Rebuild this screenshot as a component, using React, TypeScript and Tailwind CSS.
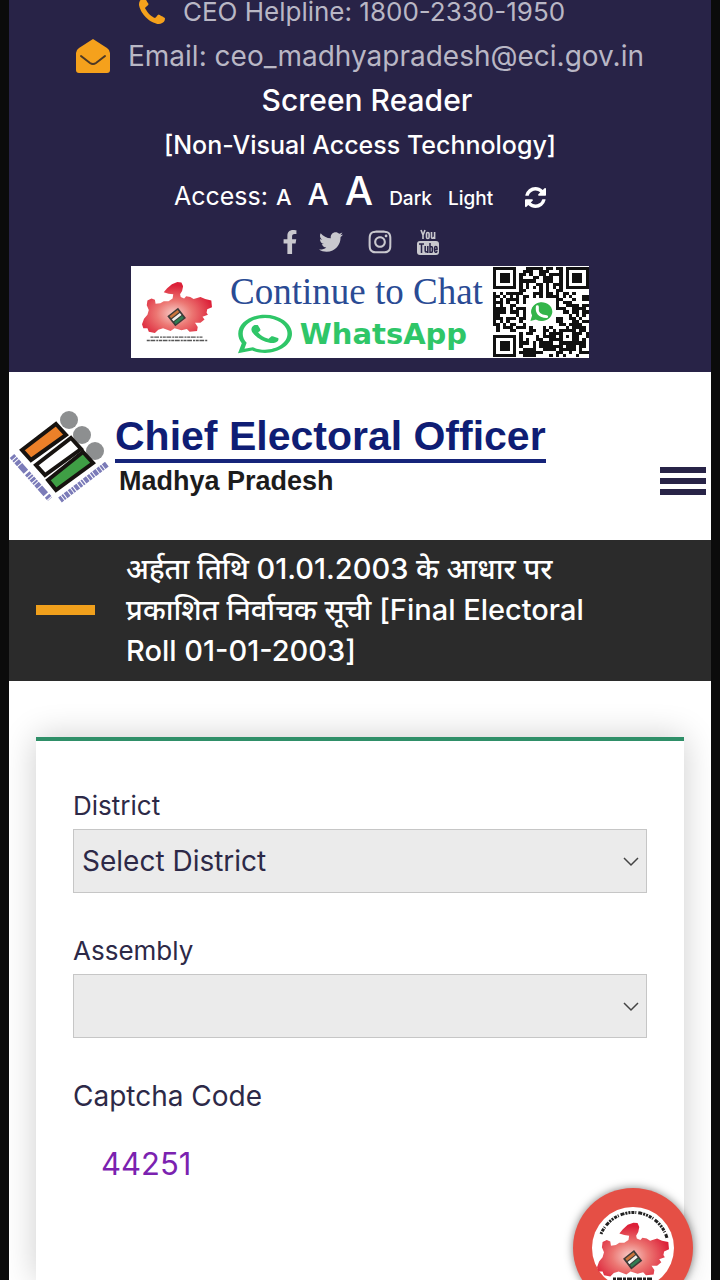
import { useState } from "react";
import { FaFacebookF, FaInstagram, FaTwitter, FaWhatsapp } from "react-icons/fa";

const districts = ["Bhopal", "Gwalior", "Indore", "Jabalpur", "Ujjain"];

const MapShape: React.FC<{ id: string }> = ({ id }) => (
	<>
		<defs>
			<radialGradient id={id} cx="0.46" cy="0.62" r="0.56">
				<stop offset="0" stopColor="#f7cfca" />
				<stop offset="0.45" stopColor="#ec7773" />
				<stop offset="1" stopColor="#dc2038" />
			</radialGradient>
		</defs>
		<path
			fill={`url(#${id})`}
			d="M64 32 74 20 88 8 104 2 116 3 121 14 118 28 112 38 114 46 124 50 130 44 142 46 152 52 172 46 186 52 204 56 206 76 192 82 190 92 194 98 178 104 184 112 172 122 156 122 164 134 162 146 140 148 132 140 116 144 96 138 84 146 62 138 48 142 38 152 20 148 16 138 4 138 0 126 6 110 16 98 20 84 14 70 16 56 28 50 38 54 40 66 54 64 64 58 78 58 90 50 92 38 78 36Z"
		/>
		<g transform="rotate(-38 102 105)">
			<rect x="82" y="86" width="40" height="38" fill="#3d3a38" />
			<rect x="87" y="90" width="30" height="8" fill="#c9743c" />
			<rect x="87" y="101" width="30" height="8" fill="#f3f0ec" />
			<rect x="87" y="112" width="30" height="8" fill="#2f7d52" />
		</g>
	</>
);

const PhoneIcon = () => (
	<svg viewBox="192 256 1408 1408" className="size-[26px] self-end" fill="#f5a11c" aria-hidden="true">
		<path d="M1600 1368q0 27-10 70.5t-21 68.5q-21 50-122 106-94 51-186 51-27 0-53-3.5t-57.5-12.5-47-14.5-55.5-20.5-49-18q-98-35-175-83-127-79-264-216t-216-264q-48-77-83-175-3-9-18-49t-20.5-55.5-14.5-47-12.5-57.5-3.5-53q0-92 51-186 56-101 106-122 25-11 68.5-21t70.5-10q14 0 21 3 18 6 53 76 11 19 30 54t35 63.5 31 53.5q3 4 17.5 25t21.5 35.5 7 28.5q0 20-28.5 50t-62 55-62 53-28.5 46q0 9 5 22.5t8.5 20.5 14 24 11.5 19q76 137 174 235t235 174q2 1 19 11.5t24 14 20.5 8.5 22.5 5q18 0 46-28.5t53-62 55-62 50-28.5q14 0 28.5 7t35.5 21.5 25 17.5q25 15 53.5 31t63.5 35 54 30q70 35 76 53 3 7 3 21z" />
	</svg>
);

const MailIcon = () => (
	<svg viewBox="0 0 34 34" className="size-[34px]" aria-hidden="true">
		<path fill="#f5a11c" d="M17 0 31 9Q34 11 34 14V31Q34 34 31 34H3Q0 34 0 31V14Q0 11 3 9Z" />
		<path d="M5 17 14 24Q17 26 20 24L29 17" fill="none" stroke="#4d3926" strokeWidth="2" strokeLinecap="round" />
	</svg>
);

const RefreshIcon = () => (
	<svg viewBox="128 128 1536 1536" className="size-[21px]" fill="currentColor" aria-hidden="true">
		<path d="M1639 1056q0 5-1 7-64 268-268 434.5t-478 166.5q-146 0-282.5-55t-243.5-157l-129 129q-19 19-45 19t-45-19-19-45v-448q0-26 19-45t45-19h448q26 0 45 19t19 45-19 45l-137 137q71 66 161 102t187 36q134 0 250-65t186-179q11-17 53-117 8-23 30-23h192q13 0 22.5 9.5t9.5 22.5zm25-800v448q0 26-19 45t-45 19h-448q-26 0-45-19t-19-45 19-45l138-138q-148-137-349-137-134 0-250 65t-186 179q-11 17-53 117-8 23-30 23h-199q-13 0-22.5-9.5t-9.5-22.5v-7q65-268 270-434.5t480-166.5q146 0 284 55.5t245 156.5l130-129q19-19 45-19t45 19 19 45z" />
	</svg>
);

const YoutubeIcon = () => (
	<svg viewBox="0 0 22 26" className="h-[26px] w-[22px]" fill="currentColor" aria-hidden="true">
		<rect y="12" width="22" height="14" rx="3" />
		<g fill="none" stroke="currentColor" strokeWidth="1.6">
			<path d="M4 1 6 6 8 1M6 6V10" />
			<rect x="9.5" y="3.5" width="2.6" height="6" rx="1.3" />
			<path d="M14.5 3V8Q14.5 9.5 16 9.2L17.6 8M17.6 3V10" />
		</g>
		<g fill="none" stroke="#282347" strokeWidth="1.5">
			<path d="M2 15H7M4.5 15V24M8.2 17V22Q8.4 23.6 10.6 22.4M10.8 17V24M13 14V24M13 18Q15.4 17 15.4 19V22Q15.4 24 13 23M20 22Q19.6 23.6 18.4 23.2 17.6 23 17.6 21V19Q17.6 17.6 18.8 17.6T20 19V20.4H17.6" />
		</g>
	</svg>
);

// 29x29 code with finder, alignment and timing patterns around seeded data
const QR_SIZE = 29;

const finder = (x: number, y: number) => {
	const d = Math.max(Math.abs(x - 3), Math.abs(y - 3));
	return d === 3 || d < 2;
};

const qrPath = (() => {
	let seed = 19500;
	let d = "";
	for (let y = 0; y < QR_SIZE; y++) {
		for (let x = 0; x < QR_SIZE; x++) {
			seed = (seed * 1103515245 + 12345) % 2147483648;
			let on = seed / 2147483648 > 0.44;
			if (x < 8 && y < 8) on = x < 7 && y < 7 && finder(x, y);
			else if (x > 20 && y < 8) on = x > 21 && y < 7 && finder(x - 22, y);
			else if (x < 8 && y > 20) on = x < 7 && y > 21 && finder(x, y - 22);
			else if (x > 19 && x < 25 && y > 19 && y < 25) {
				on = Math.max(Math.abs(x - 22), Math.abs(y - 22)) !== 1;
			} else if (x > 9 && x < 19 && y > 9 && y < 19) on = false;
			else if (x === 6 || y === 6) on = (x + y) % 2 === 0;
			if (on) d += `M${x} ${y}h1v1h-1z`;
		}
	}
	return d;
})();

const QrCode = () => (
	<svg viewBox="0 0 29 29" preserveAspectRatio="none" className="h-[90px] w-24" aria-hidden="true">
		<path d={qrPath} fill="#111" shapeRendering="crispEdges" />
		<path d="M11.3 17.4 11.8 15.6A3.2 3 0 1 1 13 16.9Z" fill="#33b54a" />
		<circle cx="14.5" cy="14.4" r="2.9" fill="#33b54a" />
		<path d="M13.4 12.8Q13 15.8 16.2 16" fill="none" stroke="#fff" strokeWidth="0.9" strokeLinecap="round" />
	</svg>
);

const WhatsappBanner = () => (
	<a href="#whatsapp" className="flex h-[92px] w-[458px] max-w-full items-center bg-white pl-[11px]">
		<svg viewBox="0 0 206 180" className="h-[62px] w-[70px] shrink-0" aria-hidden="true">
			<MapShape id="map-banner" />
			<path d="M25 164H180M14 174H192" stroke="#555" strokeWidth="4" strokeDasharray="9 2 14 3 6 2" />
		</svg>
		<span className="flex flex-1 flex-col items-center pt-1">
			<span className="pl-2 font-['Liberation_Serif',serif] text-[37px] leading-10 whitespace-nowrap text-[#2a4b94]">
				Continue to Chat
			</span>
			<span className="flex items-center gap-2">
				<FaWhatsapp preserveAspectRatio="none" className="h-11 w-[54px] text-[#2fc668]" />
				<span className="font-['DejaVu_Sans',sans-serif] text-[29px] leading-10 font-bold text-[#2fc668]">
					WhatsApp
				</span>
			</span>
		</span>
		<QrCode />
	</a>
);

const VoterLogo = () => (
	<svg viewBox="0 0 100 94" className="h-[94px] w-[100px] shrink-0" aria-hidden="true">
		<g fill="#8d8f90">
			<circle cx="60" cy="11" r="9" />
			<circle cx="73" cy="26" r="9" />
			<circle cx="86" cy="42" r="9" />
		</g>
		<g strokeWidth="4" stroke="#171310">
			<path d="M47 15 57 26 22 51 13 41Z" fill="#ec8029" />
			<path d="M62 29 72 40 36 66 27 56Z" fill="#fff" />
			<path d="M74 43 84 54 47 81 39 71Z" fill="#3f9f45" />
		</g>
		<g fill="none" stroke="#7b7bb8" strokeWidth="6">
			<path d="M3 47 41 90" strokeDasharray="3 1 2 1 4 1 9 2 3 1 2 1" />
			<path d="M51 91 98 55" strokeDasharray="3 1 2 1 4 1" />
		</g>
	</svg>
);

const SelectField: React.FC<{ id: string; label: string; options: string[] }> = ({ id, label, options }) => (
	<div>
		<label htmlFor={id} className="block text-[26px] leading-[46px]">
			{label}
		</label>
		<div className="relative">
			<select
				id={id}
				className="block h-16 w-full appearance-none border border-[#c6c6c6] bg-[#ebebeb] px-2 text-[28px]"
			>
				{options.map((option) => (
					<option key={option}>{option}</option>
				))}
			</select>
			<svg
				viewBox="0 0 16 10"
				className="pointer-events-none absolute top-7 right-2 h-2.5 w-4"
				fill="none"
				stroke="#444"
				strokeWidth="1.5"
				aria-hidden="true"
			>
				<path d="M1 1 8 8 15 1" />
			</svg>
		</div>
	</div>
);

const TopBar = () => (
	<div className="flex flex-col items-center bg-[#282347] pb-3.5 text-white">
		<p className="flex h-6 items-center gap-[18px] pr-4 text-[26px] leading-6 whitespace-nowrap text-[#b9b7c5]">
			<PhoneIcon />
			CEO Helpline: 1800-2330-1950
		</p>
		<p className="mt-2.5 flex h-11 items-center gap-[18px] text-[28px] whitespace-nowrap text-[#b9b7c5]">
			<MailIcon />
			<a href="mailto:ceo_madhyapradesh@eci.gov.in">Email: ceo_madhyapradesh@eci.gov.in</a>
		</p>
		<a href="#screen-reader" className="pl-3.5 text-[30px] leading-[44px] font-medium">
			Screen Reader
		</a>
		<a href="#screen-reader" className="text-[25px] leading-[46px] font-medium">
			[Non-Visual Access Technology]
		</a>
		<div className="flex h-[50px] items-baseline leading-[46px]">
			<span className="text-[25px]">Access:</span>
			<button className="pl-2 text-[22px] font-medium">A</button>
			<button className="pl-4 text-[30px] font-medium">A</button>
			<button className="pl-4 text-[40px] font-medium">A</button>
			<button className="pl-4 text-[19px] font-medium">Dark</button>
			<button className="pl-4 text-[19px] font-medium">Light</button>
			<button className="self-center pt-2 pl-8" aria-label="Refresh">
				<RefreshIcon />
			</button>
		</div>
		<div className="flex h-12 items-center gap-5 text-[#c9c8ce]">
			<a href="#facebook" aria-label="Facebook">
				<FaFacebookF className="h-6 w-[18px]" />
			</a>
			<a href="#twitter" aria-label="Twitter">
				<FaTwitter className="size-6" />
			</a>
			<a href="#instagram" className="px-1" aria-label="Instagram">
				<FaInstagram className="size-[26px]" />
			</a>
			<a href="#youtube" aria-label="YouTube">
				<YoutubeIcon />
			</a>
		</div>
		<WhatsappBanner />
	</div>
);

const Header: React.FC = () => {
	const [menuOpen, setMenuOpen] = useState<boolean>(false);

	return (
		<header className="flex h-[168px] items-center justify-between bg-white pr-[5px]">
			<a href="#home" className="flex items-center gap-1.5 font-bold">
				<VoterLogo />
				<span className="flex flex-col items-start">
					<span className="border-b-4 border-[#16247a] font-['Liberation_Sans',sans-serif] text-[41px] leading-[46px] whitespace-nowrap text-[#0f1d74]">
						Chief Electoral Officer
					</span>
					<span className="pl-1 font-['Liberation_Sans',sans-serif] text-[27px] leading-9 text-[#1c1c1c]">
						Madhya Pradesh
					</span>
				</span>
			</a>
			<button
				className="flex w-[46px] flex-col gap-[5px] pt-[50px]"
				aria-label="Menu"
				aria-expanded={menuOpen}
				onClick={() => setMenuOpen(!menuOpen)}
			>
				<span className="h-1.5 w-full bg-[#282347]" />
				<span className="h-1.5 w-full bg-[#282347]" />
				<span className="h-1.5 w-full bg-[#282347]" />
			</button>
		</header>
	);
};

const ChatButton = () => (
	<button
		className="fixed right-[27px] -bottom-7 size-[120px] rounded-full bg-[#e54f45] p-[18px] shadow-[0_0_8px_rgba(0,0,0,0.5)]"
		aria-label="Chat"
	>
		<svg viewBox="0 0 84 84" aria-hidden="true">
			<circle cx="42" cy="42" r="41" fill="#fff" />
			<path
				d="M10 28A35 35 0 0 1 76 32"
				fill="none"
				stroke="#222"
				strokeWidth="3"
				strokeDasharray="2 1 3 1 1 2 4 1 2 1"
			/>
			<svg x="6" y="16" width="72" height="56" viewBox="0 0 206 156" preserveAspectRatio="none">
				<MapShape id="map-chat" />
			</svg>
			<path d="M22 73H62" stroke="#222" strokeWidth="3" strokeDasharray="3 1 5 1" />
		</svg>
	</button>
);

export default function App() {
	return (
		<div className="flex min-h-screen flex-col bg-[#0b0b0b] px-[9px] font-[Inter,'Noto_Sans',sans-serif]">
			<TopBar />
			<Header />
			<div className="flex items-center gap-[31px] bg-[#2b2b2b] px-[27px] pt-2 pb-2.5 text-white">
				<span className="h-2.5 w-[59px] shrink-0 bg-[#f0a01c]" />
				<h1 className="max-w-[510px] text-[29px] leading-[41px] font-medium">
					अर्हता तिथि 01.01.2003 के आधार पर प्रकाशित निर्वाचक सूची [Final Electoral Roll 01-01-2003]
				</h1>
			</div>
			<main className="flex flex-1 flex-col overflow-hidden bg-white px-[27px] pt-14">
				<form className="flex flex-1 flex-col gap-[35px] border-t-4 border-[#2f8f68] bg-white px-[37px] pt-[42px] text-[#2d2947] shadow-[0_0_32px_rgba(0,0,0,0.2)]">
					<SelectField id="district" label="District" options={["Select District", ...districts]} />
					<SelectField id="assembly" label="Assembly" options={[""]} />
					<div>
						<p className="text-[28px] leading-[46px]">Captcha Code</p>
						<output className="block px-7 pt-5 text-[31px] leading-[50px] text-[#7b22b0]">44251</output>
					</div>
				</form>
			</main>
			<ChatButton />
		</div>
	);
}
